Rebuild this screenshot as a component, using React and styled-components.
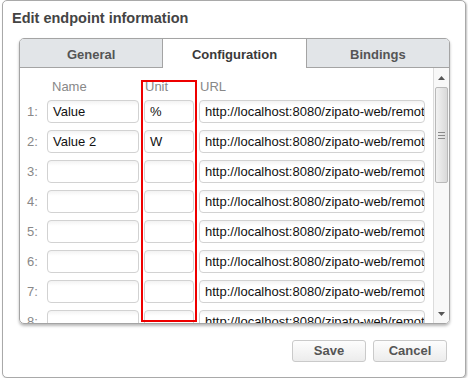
import React from 'react'
import styled, { createGlobalStyle } from 'styled-components'

const GlobalStyle = createGlobalStyle`
  body {
    margin: 0;
    background: #ffffff;
    font-family: "Liberation Sans", Arial, sans-serif;
  }
`

const Dialog = styled.div`
  margin-left: 2px;
  width: 462px;
  height: 376px;
  border: 1px solid #a9a9a9;
  border-radius: 5px;
  background: #fff;
  box-shadow: 1px 1px 2px rgba(0, 0, 0, 0.25);
  display: flex;
  flex-direction: column;
`

const Title = styled.div`
  height: 37px;
  box-sizing: border-box;
  padding: 9px 0 0 9px;
  font-size: 14.5px;
  line-height: 17px;
  font-weight: bold;
  color: #444;
`

const Panel = styled.div`
  margin-left: 16px;
  width: 429px;
  height: 284px;
  border: 1px solid #a4a4a4;
  border-radius: 5px;
  box-shadow: 0 2px 3px rgba(0, 0, 0, 0.28);
  display: flex;
  flex-direction: column;
  overflow: hidden;
`

const TabBar = styled.div`
  display: flex;
  height: 29px;
`

const Tab = styled.div`
  flex: 1;
  box-sizing: border-box;
  padding-top: 8px;
  line-height: 16px;
  text-align: center;
  font-size: 13px;
  font-weight: bold;
  color: ${p => (p.$active ? '#3a3a3a' : '#555')};
  background: ${p => (p.$active ? '#fff' : '#e2e5e8')};
  border-bottom: ${p => (p.$active ? 'none' : '1px solid #a4a4a4')};
  border-left: ${p => (p.$active ? '1px solid #a4a4a4' : 'none')};
  border-right: ${p => (p.$active ? '1px solid #a4a4a4' : 'none')};
`

const Content = styled.div`
  position: relative;
  flex: 1;
  display: flex;
  overflow: hidden;
`

const List = styled.div`
  flex: 1;
  padding-top: 11px;
  overflow: hidden;
`

const Row = styled.div`
  display: grid;
  grid-template-columns: 22px 92px 50px 226px;
  column-gap: 5px;
  align-items: center;
  height: ${p => (p.$header ? '16px' : '23px')};
  margin-bottom: ${p => (p.$header ? '5px' : '7px')};
  font-size: 13px;
`

const RowLabel = styled.div`
  padding-left: 7px;
  color: #888;
`

const HeaderCell = styled.div`
  color: #888;
  padding-left: ${p => p.$pad || 1}px;
  line-height: 16px;
`

const Input = styled.div`
  height: 23px;
  box-sizing: border-box;
  border: 1px solid #d2d2d2;
  border-radius: 4px;
  background: linear-gradient(#f3f3f3, #fff 5px);
  padding-left: 5px;
  line-height: 21px;
  color: #111;
  white-space: nowrap;
  overflow: hidden;
`

const Highlight = styled.div`
  position: absolute;
  left: 121px;
  top: 12px;
  width: 52px;
  height: 238px;
  border: 2px solid #ee0000;
  pointer-events: none;
`

const Scrollbar = styled.div`
  width: 15px;
  border-left: 1px solid #dcdcdc;
  background: #f8f8f8;
  display: flex;
  flex-direction: column;
  align-items: center;
`

const Arrow = styled.div`
  height: 19px;
  width: 100%;
  display: flex;
  align-items: center;
  justify-content: center;
`

const Track = styled.div`
  flex: 1;
  width: 100%;
  display: flex;
  flex-direction: column;
`

const Thumb = styled.div`
  margin: 0 1px;
  height: 96px;
  border: 1px solid #b9b9b9;
  border-radius: 2px;
  box-sizing: border-box;
  background: linear-gradient(to right, #f2f2f2, #d9d9d9);
  display: flex;
  align-items: center;
  justify-content: center;
`

const Footer = styled.div`
  display: flex;
  justify-content: flex-end;
  gap: 7px;
  padding: 16px 18px 0 0;
`

const Button = styled.div`
  width: 74px;
  height: 22px;
  box-sizing: border-box;
  border: 1px solid #cacaca;
  border-radius: 3px;
  background: linear-gradient(#fdfdfd, #ececec);
  text-align: center;
  line-height: 20px;
  font-size: 13px;
  font-weight: bold;
  color: #555;
`

// only the visible part of the address, the field cuts it off
const url = 'http://localhost:8080/zipato-web/remot'

const rows = [
  { name: 'Value', unit: '%' },
  { name: 'Value 2', unit: 'W' },
  { name: '', unit: '' },
  { name: '', unit: '' },
  { name: '', unit: '' },
  { name: '', unit: '' },
  { name: '', unit: '' },
  { name: '', unit: '' },
]

const Triangle = ({ down }) => (
  <svg width="7" height="4" viewBox="0 0 7 4">
    <path d={down ? 'M0 0h7L3.5 4z' : 'M0 4h7L3.5 0z'} fill="#555" />
  </svg>
)

const Grip = () => (
  <svg width="7" height="7" viewBox="0 0 7 7">
    <path d="M0 .5h7M0 3.5h7M0 6.5h7" stroke="#8a8a8a" strokeWidth="1" />
  </svg>
)

const App = () => {
  return (
    <>
      <GlobalStyle />
      <Dialog>
        <Title>Edit endpoint information</Title>
        <Panel>
          <TabBar>
            <Tab>General</Tab>
            <Tab $active>Configuration</Tab>
            <Tab>Bindings</Tab>
          </TabBar>
          <Content>
            <List>
              <Row $header>
                <div />
                <HeaderCell $pad={5}>Name</HeaderCell>
                <HeaderCell>Unit</HeaderCell>
                <HeaderCell>URL</HeaderCell>
              </Row>
              {rows.map((r, i) => (
                <Row key={i}>
                  <RowLabel>{i + 1}:</RowLabel>
                  <Input>{r.name}</Input>
                  <Input>{r.unit}</Input>
                  <Input>{url}</Input>
                </Row>
              ))}
            </List>
            <Highlight />
            <Scrollbar>
              <Arrow><Triangle /></Arrow>
              <Track>
                <Thumb><Grip /></Thumb>
              </Track>
              <Arrow><Triangle down /></Arrow>
            </Scrollbar>
          </Content>
        </Panel>
        <Footer>
          <Button>Save</Button>
          <Button>Cancel</Button>
        </Footer>
      </Dialog>
    </>
  )
}

export default App
